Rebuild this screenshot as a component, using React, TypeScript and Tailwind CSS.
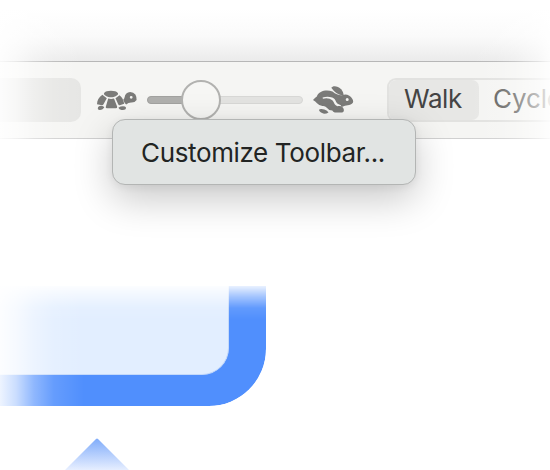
function Turtle() {
  return (
    <svg width="42" height="24" viewBox="96 88 42 24" fill="#7b7b79" className="shrink-0">
      <path d="M104 93.2C105.8 90 116 90 118 93.2C118.7 95 114.5 97.2 111 97.2C107.5 97.2 103.3 95 104 93.2Z" />
      <path d="M102.4 94.8C98.7 97.3 97.1 100.5 97 104.2L102 105.2Q103 105.3 103.5 104.2L106.8 98.2Z" />
      <path d="M108.2 98.6Q111 99.4 114 98.6L117.2 106.7Q117.4 108.3 115.8 108.3H107.2Q105.3 108.3 105.8 106.7Z" />
      <path d="M115.5 98.2L119.5 95.2Q123 97.6 124.2 103.8L119.8 105.2Q118.6 105.3 118.2 104.2Z" />
      <path d="M97.8 108.4Q98 105.8 101 105.8Q103.8 106 104.3 107.5L102.5 109.3Q101.3 110 99.5 109.9Q97.7 109.7 97.8 108.4Z" />
      <path d="M118.4 107.7Q121.2 105.8 124.8 106.5Q126.8 107.4 125.5 109.2Q124.2 110.2 121.5 109.9Q119.2 109.4 118.4 107.7Z" />
      <path fillRule="evenodd" d="M124.6 97.2Q125.4 92.3 130.2 92Q133.5 92 135.4 94.6Q136.8 97.2 136.6 100Q134.8 102.7 131.4 102.6Q128.3 102.5 126.2 104.4Q124.3 103 123.2 99.7Q124.3 98.8 124.6 97.2ZM129.8 97.3A1.4 1.4 0 1 0 132.6 97.3A1.4 1.4 0 1 0 129.8 97.3Z" />
    </svg>
  );
}

function Hare() {
  return (
    <svg width="42" height="30" viewBox="312 85 42 30" fill="#7b7b79" className="shrink-0">
      <path d="M331.3 87.8C332.7 85.4 337.5 85.6 341.4 89.4Q343.1 91.3 343.8 95.2Q337 96 331.3 87.8Z" />
      <path fillRule="evenodd" d="M313 100Q315 98 316.8 96.6C319 90.5 327 89.4 332.5 91.6C337 95.3 341 96.2 345.1 94.6Q349.8 94.8 352.4 98.9Q354.2 102.2 351.9 103.8C348.5 105.8 343.8 105.5 341.9 107.2Q341.2 104.9 338.7 104.2C335.5 103.6 336.4 99 332.2 97.5Q327.7 96 322.6 97.4L322.9 98.7Q329 97.5 332.3 100.3C334.2 102.1 334.1 104.9 337.3 106.2C341.2 105.1 343.7 107.1 343.9 110Q344 112.4 342.2 112.4H334.8Q333 112.3 332.3 110.6Q328.6 110.4 326.5 107.5Q325.3 105.8 322.8 106Q319.7 106.2 317 103.3Q315.5 101.3 313 100ZM345.7 99.5A1.5 1.5 0 1 0 348.7 99.5A1.5 1.5 0 1 0 345.7 99.5Z" />
      <path d="M319 110.1Q319.2 108.6 324.3 109.4Q327.6 110.3 328.5 112.5Q326.1 114 323.2 113.6Q319.5 112.5 319 110.1Z" />
    </svg>
  );
}

function SpeedSlider() {
  return (
    <div className="relative ml-[9px] mr-[9px] h-2 w-[156px] shrink-0 rounded-full border border-[#d8d8d6] bg-[#e3e3e1]">
      <div className="-ml-px -mt-px h-2 w-[54px] rounded-full border border-[#a2a2a0] bg-[#b0b0ae]" />
      <div className="absolute -top-[17px] left-[33px] size-10 rounded-full border-2 border-[#b2b2b0] bg-[#f6f6f4]" />
    </div>
  );
}

export default function App() {
  return (
    <main className="relative flex h-[470px] w-[550px] flex-col overflow-hidden bg-white font-['Inter','Liberation_Sans',sans-serif]">
      <div className="h-[61px] shrink-0 bg-linear-to-b from-white from-15% via-[#fafafa] via-60% to-[#ebebeb]" />
      <header className="flex h-[78px] shrink-0 items-center border-y border-t-[#b7b7b7] border-b-[#d0d0d0] bg-[#f5f5f3]">
        <div className="h-11 w-[81px] shrink-0 rounded-r-[10px] bg-[#e6e6e4]" />
        <div className="ml-[15px] flex shrink-0 items-center">
          <Turtle />
          <SpeedSlider />
          <Hare />
        </div>
        <div className="ml-[33px] flex h-11 w-[163px] shrink-0 items-center overflow-hidden whitespace-nowrap rounded-l-[9px] border-2 border-r-0 border-[#e2e2e0] text-[26px]">
          <div className="flex h-10 w-[90px] shrink-0 items-center rounded-[7px] bg-[#e7e7e5] pb-[3px] pl-[15px] tracking-[-0.4px] text-[#444]">Walk</div>
          <span className="ml-[14px] shrink-0 pb-[3px] tracking-[-0.1px] text-[#666664]">Cycle</span>
        </div>
      </header>
      <section className="mt-[147px] h-[120px] w-[266px] shrink-0 rounded-br-[57px] bg-[#508ffd] mask-[linear-gradient(to_bottom,rgb(0_0_0/0.12),rgb(0_0_0/0.5)_10px,rgb(0_0_0/0.9)_22px,black_34px)]">
        <div className="h-[89px] w-[229px] rounded-br-[27px] border-b border-r border-[#c4d9fa] bg-[#e2eeff]" />
      </section>
      <svg width="64" height="32" viewBox="0 0 64 32" className="ml-[65px] mt-[32px] shrink-0">
        <defs>
          <linearGradient id="arrow" x2="0" y2="1">
            <stop stopColor="#80acfa" />
            <stop offset="1" stopColor="#e6eeff" />
          </linearGradient>
        </defs>
        <path d="M0 32L31 1Q32 0 33 1L64 32Z" fill="url(#arrow)" />
      </svg>
      <div className="pointer-events-none absolute inset-y-0 left-0 w-[84px] bg-[linear-gradient(to_right,rgb(255_255_255/0.9),rgb(255_255_255/0.7)_16px,rgb(255_255_255/0.36)_34px,rgb(255_255_255/0.12)_54px,transparent)]" />
      <div className="pointer-events-none absolute right-0 top-0 h-[270px] w-[84px] bg-[linear-gradient(to_left,rgb(255_255_255/0.88),rgb(255_255_255/0.6)_12px,rgb(255_255_255/0.25)_34px,rgb(255_255_255/0.07)_54px,transparent)]" />
      <div className="absolute left-28 top-[119px] flex h-[66px] w-[304px] items-center whitespace-nowrap rounded-[13px] border border-[#b3b5b4] bg-[#e1e4e3] pl-7 text-[26px] tracking-[-0.36px] text-[#222423] shadow-[0_14px_38px_rgba(0,0,0,0.22),0_2px_8px_rgba(0,0,0,0.06)]">
        Customize Toolbar...
      </div>
    </main>
  );
}
